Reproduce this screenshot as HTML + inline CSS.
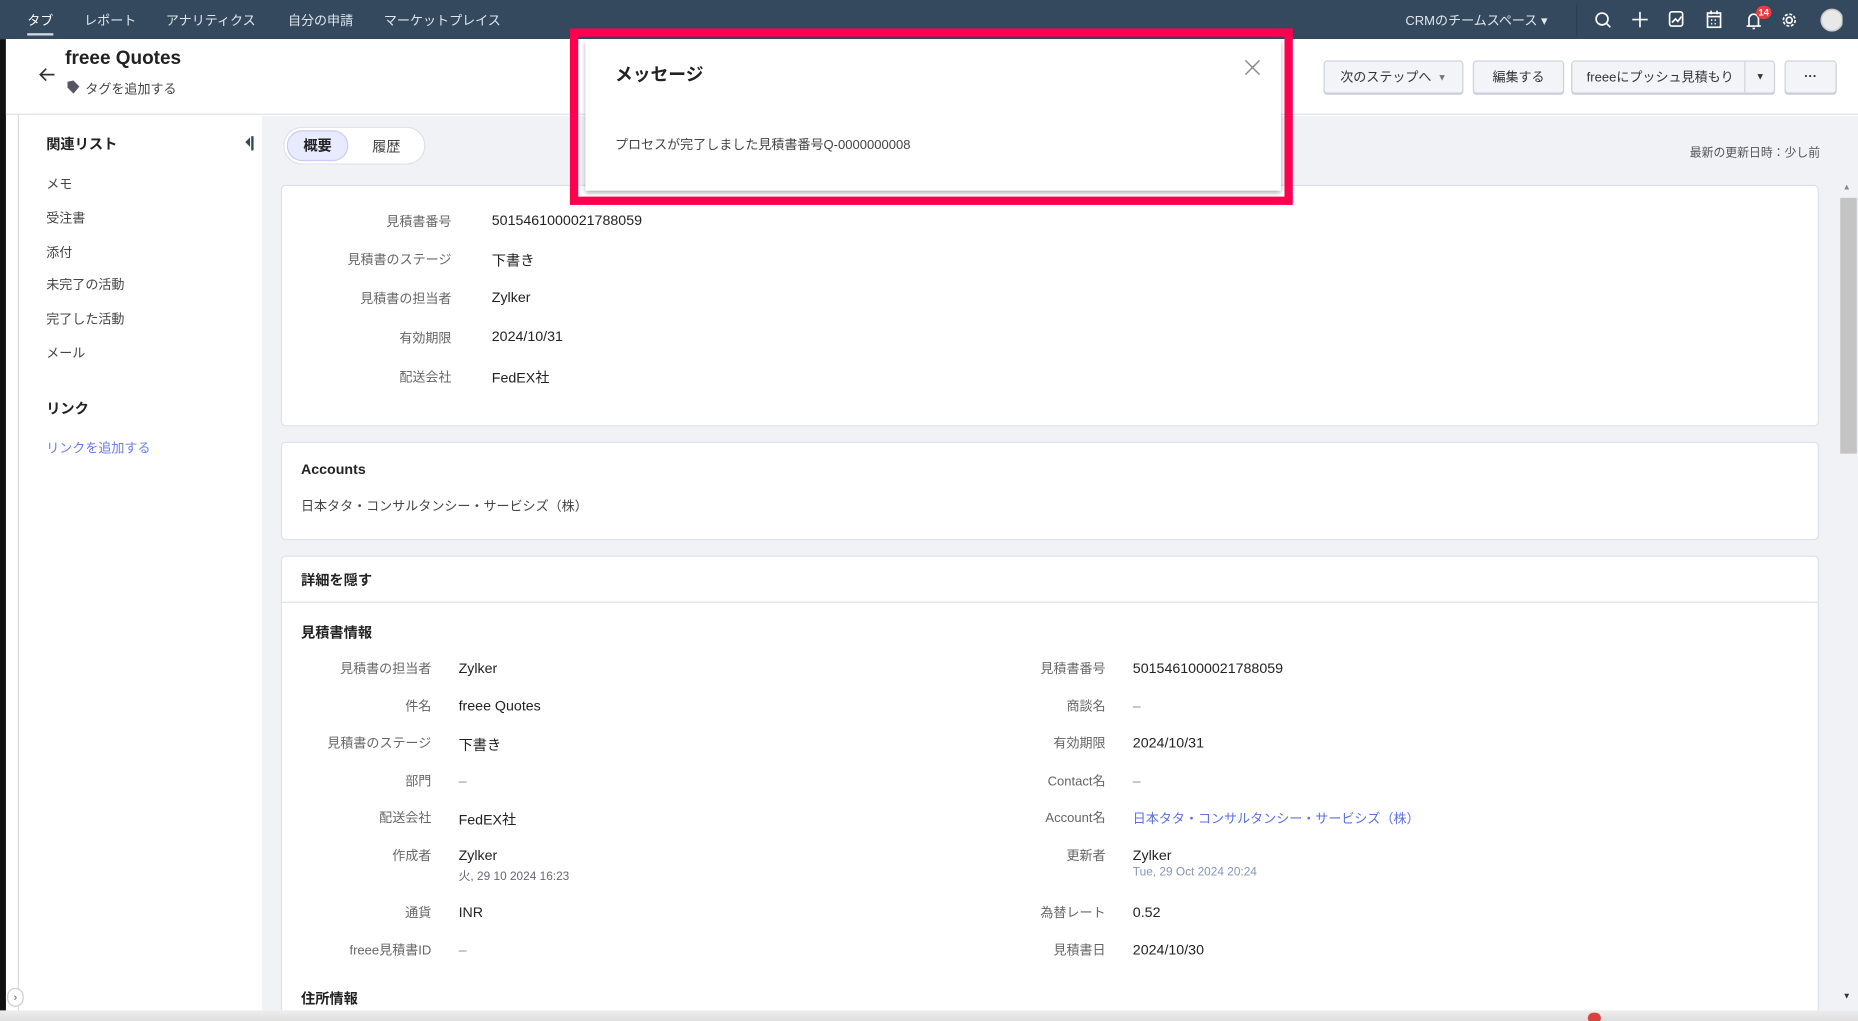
<!DOCTYPE html>
<html><head><meta charset="utf-8"><style>
*{box-sizing:border-box;margin:0;padding:0}
html,body{width:1858px;height:1021px;overflow:hidden;background:#fff}
body{font-family:"Liberation Sans","Noto Sans CJK JP",sans-serif;color:#222}
#w{position:absolute;left:0;top:0;width:1568px;height:862px;transform:scale(1.18495,1.1845);transform-origin:0 0;overflow:hidden;background:#fff}
.a{position:absolute;white-space:nowrap}
.top{left:0;top:0;width:1568px;height:33px;background:#34495e}
.nav{top:9px;font-size:11px;color:#dfe6ee}
.lbl{font-size:11px;color:#666;text-align:right}
.val{font-size:12px;color:#222}
.card{background:#fff;border:1px solid #dfe1ea;border-radius:4px}
.btn{top:51px;height:28px;border:1px solid #cfd3de;border-radius:3px;background:#f3f4f8;font-size:11px;color:#333;display:flex;align-items:center;justify-content:center;box-shadow:0 1px 0 #c8ccd6}
.side{font-size:11px;color:#444;left:39px}
</style></head><body><div id="w">
<div class="a top"></div>
<div class="a nav" style="left:23px;color:#fff">タブ</div>
<div class="a" style="left:23px;top:28px;width:22px;height:2px;background:#cfd8e0"></div>
<div class="a nav" style="left:71px">レポート</div>
<div class="a nav" style="left:140px">アナリティクス</div>
<div class="a nav" style="left:243px">自分の申請</div>
<div class="a nav" style="left:324px">マーケットプレイス</div>
<div class="a nav" style="left:1186px">CRMのチームスペース ▾</div>
<div class="a" style="left:1330px;top:4px;width:1px;height:26px;background:#2c3e50"></div>
<svg class="a" style="left:1340px;top:6px" width="215" height="22" viewBox="0 0 215 22" fill="none" stroke="#fff" stroke-width="1.4">
<circle cx="12" cy="10" r="5"/><path d="M15.5 13.5l3.5 3.5"/>
<path d="M44 4v13M37.5 10.5h13"/>
<rect x="69" y="4" width="11" height="12" rx="2"/><path d="M71 13l3-3 2 2 3-4"/>
<rect x="101" y="5" width="11" height="12"/><path d="M101 8h11M104 3v3M109 3v3M104 11h1M107 11h1M110 11h0M104 14h1M107 14h1"/>
<path d="M134 16h12M136 16v-6a4 4 0 0 1 8 0v6M139 18h2"/>
<circle cx="170" cy="11" r="2.5"/><circle cx="170" cy="11" r="5" stroke-dasharray="2.5 1.4"/>
<circle cx="206" cy="11" r="9" fill="#e8e8e8" stroke="#ccc"/>
</svg>
<div class="a" style="left:1482px;top:5px;width:13px;height:11px;border-radius:6px;background:#e63e3e;color:#fff;font-size:8px;font-weight:bold;text-align:center;line-height:11px">14</div>
<div class="a" style="left:0;top:33px;width:5px;height:829px;background:#111"></div>
<div class="a" style="left:15px;top:97px;width:1px;height:765px;background:#d8dae6"></div>
<!-- header -->
<div class="a" style="left:5px;top:33px;width:1563px;height:64px;border-bottom:1px solid #dfe1ea;background:#fff"></div>
<svg class="a" style="left:32px;top:56px" width="16" height="14" viewBox="0 0 16 14" fill="none" stroke="#333" stroke-width="1.4"><path d="M14 7H2M7 2L2 7l5 5"/></svg>
<div class="a" style="left:55px;top:41px;font-size:16px;font-weight:bold;color:#222">freee Quotes</div>
<svg class="a" style="left:56px;top:67px" width="12" height="13" viewBox="0 0 12 13"><path d="M6 1l5 5-5 6-5-5V2z" fill="#556"/></svg>
<div class="a" style="left:72px;top:67px;font-size:11px;color:#444">タグを追加する</div>
<div class="a btn" style="left:1117px;width:118px">次のステップへ <span style="font-size:8px;margin-left:5px;color:#777">▼</span></div>
<div class="a btn" style="left:1243px;width:77px">編集する</div>
<div class="a btn" style="left:1326px;width:172px;justify-content:flex-start;padding-left:12px">freeeにプッシュ見積もり<span style="position:absolute;left:145px;top:0;height:26px;border-left:1px solid #cfd3de;width:26px;text-align:center;line-height:26px;font-size:8px">▼</span></div>
<div class="a btn" style="left:1506px;width:44px;font-weight:bold">···</div>
<!-- sidebar -->
<div class="a" style="left:39px;top:113px;font-size:12px;font-weight:bold;color:#222">関連リスト</div>
<div class="a" style="left:207px;top:116px;width:0;height:0;border:4px solid transparent;border-right:4px solid #34495e;border-left:0"></div>
<div class="a" style="left:212px;top:115px;width:2px;height:12px;background:#34495e"></div>
<div class="a side" style="top:147px">メモ</div>
<div class="a side" style="top:176px">受注書</div>
<div class="a side" style="top:205px">添付</div>
<div class="a side" style="top:232px">未完了の活動</div>
<div class="a side" style="top:261px">完了した活動</div>
<div class="a side" style="top:290px">メール</div>
<div class="a" style="left:39px;top:336px;font-size:12px;font-weight:bold;color:#222">リンク</div>
<div class="a side" style="top:370px;color:#6b7de0">リンクを追加する</div>
<div class="a" style="left:6px;top:834px;width:14px;height:16px;border:1px solid #ccc;border-radius:8px;background:#fff;font-size:9px;color:#666;text-align:center;line-height:14px">›</div>
<!-- content -->
<div class="a" style="left:221px;top:98px;width:1347px;height:755px;background:#f1f2f6"></div>
<div class="a" style="left:239px;top:107px;width:120px;height:32px;border-radius:16px;background:#fff;border:1px solid #dfe1ea"></div>
<div class="a" style="left:242px;top:110px;width:52px;height:26px;border-radius:13px;background:#e8eaff;border:1px solid #c8ccf5;font-size:12px;font-weight:bold;text-align:center;line-height:24px">概要</div>
<div class="a" style="left:314px;top:115px;font-size:12px;color:#444">履歴</div>
<div class="a" style="left:1426px;top:120px;font-size:10px;color:#555">最新の更新日時：少し前</div>
<div class="a card" style="left:237px;top:156px;width:1298px;height:204px"></div>
<div class="a lbl" style="left:240px;width:141px;top:179px">見積書番号</div><div class="a val" style="left:415px;top:179px">5015461000021788059</div>
<div class="a lbl" style="left:240px;width:141px;top:211px">見積書のステージ</div><div class="a val" style="left:415px;top:211px">下書き</div>
<div class="a lbl" style="left:240px;width:141px;top:244px">見積書の担当者</div><div class="a val" style="left:415px;top:244px">Zylker</div>
<div class="a lbl" style="left:240px;width:141px;top:277px">有効期限</div><div class="a val" style="left:415px;top:277px">2024/10/31</div>
<div class="a lbl" style="left:240px;width:141px;top:310px">配送会社</div><div class="a val" style="left:415px;top:310px">FedEX社</div>
<div class="a card" style="left:237px;top:373px;width:1298px;height:83px"></div>
<div class="a" style="left:254px;top:389px;font-size:12px;font-weight:bold">Accounts</div>
<div class="a" style="left:254px;top:419px;font-size:11px;color:#444">日本タタ・コンサルタンシー・サービシズ（株）</div>
<div class="a card" style="left:237px;top:469px;width:1298px;height:400px"></div>
<div class="a" style="left:238px;top:508px;width:1296px;height:1px;background:#dfe1ea"></div>
<div class="a" style="left:254px;top:481px;font-size:12px;font-weight:bold">詳細を隠す</div>
<div class="a" style="left:254px;top:525px;font-size:12px;font-weight:bold">見積書情報</div>
<div class="a lbl" style="left:240px;width:124px;top:556px">見積書の担当者</div><div class="a val" style="left:387px;top:557px">Zylker</div>
<div class="a lbl" style="left:240px;width:124px;top:588px">件名</div><div class="a val" style="left:387px;top:589px">freee Quotes</div>
<div class="a lbl" style="left:240px;width:124px;top:619px">見積書のステージ</div><div class="a val" style="left:387px;top:620px">下書き</div>
<div class="a lbl" style="left:240px;width:124px;top:651px">部門</div><div class="a val" style="left:387px;top:652px;color:#888">–</div>
<div class="a lbl" style="left:240px;width:124px;top:682px">配送会社</div><div class="a val" style="left:387px;top:683px">FedEX社</div>
<div class="a lbl" style="left:240px;width:124px;top:714px">作成者</div><div class="a val" style="left:387px;top:715px">Zylker</div><div class="a" style="left:387px;top:731px;font-size:10px;color:#667">火, 29 10 2024 16:23</div>
<div class="a lbl" style="left:240px;width:124px;top:762px">通貨</div><div class="a val" style="left:387px;top:763px">INR</div>
<div class="a lbl" style="left:240px;width:124px;top:794px">freee見積書ID</div><div class="a val" style="left:387px;top:795px;color:#888">–</div>
<div class="a lbl" style="left:780px;width:153px;top:556px">見積書番号</div><div class="a val" style="left:956px;top:557px">5015461000021788059</div>
<div class="a lbl" style="left:780px;width:153px;top:588px">商談名</div><div class="a val" style="left:956px;top:589px;color:#888">–</div>
<div class="a lbl" style="left:780px;width:153px;top:619px">有効期限</div><div class="a val" style="left:956px;top:620px">2024/10/31</div>
<div class="a lbl" style="left:780px;width:153px;top:651px">Contact名</div><div class="a val" style="left:956px;top:652px;color:#888">–</div>
<div class="a lbl" style="left:780px;width:153px;top:682px">Account名</div><div class="a" style="left:956px;top:683px;font-size:11px;color:#5b6fe0">日本タタ・コンサルタンシー・サービシズ（株）</div>
<div class="a lbl" style="left:780px;width:153px;top:714px">更新者</div><div class="a val" style="left:956px;top:715px">Zylker</div><div class="a" style="left:956px;top:731px;font-size:10px;color:#8a93b8">Tue, 29 Oct 2024 20:24</div>
<div class="a lbl" style="left:780px;width:153px;top:762px">為替レート</div><div class="a val" style="left:956px;top:763px">0.52</div>
<div class="a lbl" style="left:780px;width:153px;top:794px">見積書日</div><div class="a val" style="left:956px;top:795px">2024/10/30</div>
<div class="a" style="left:254px;top:834px;font-size:12px;font-weight:bold">住所情報</div>
<!-- scrollbar -->
<div class="a" style="left:1552px;top:98px;width:16px;height:755px;background:#f1f2f6"></div>
<div class="a" style="left:1555px;top:155px;font-size:7px;color:#888">▲</div>
<div class="a" style="left:1553px;top:167px;width:14px;height:216px;background:#c4c4c4"></div>
<div class="a" style="left:1555px;top:838px;font-size:7px;color:#333">▼</div>
<div class="a" style="left:0;top:853px;width:1568px;height:9px;background:linear-gradient(#eee,#ddd)"></div>
<div class="a" style="left:1340px;top:855px;width:11px;height:9px;border-radius:5px;background:#d94040"></div>
<!-- modal -->
<div class="a" style="left:481px;top:24px;width:610px;height:149px;border:7px solid #ff0050"></div>
<div class="a" style="left:494px;top:34px;width:587px;height:127px;background:#fff;box-shadow:0 2px 4px rgba(0,0,0,.35)"></div>
<div class="a" style="left:519px;top:52px;font-size:15px;font-weight:bold;color:#222">メッセージ</div>
<svg class="a" style="left:1049px;top:49px" width="16" height="16" viewBox="0 0 16 16" stroke="#888" stroke-width="1.2"><path d="M2 2l12 12M14 2L2 14"/></svg>
<div class="a" style="left:519px;top:114px;font-size:11px;color:#444">プロセスが完了しました見積書番号Q-0000000008</div>
</div></body></html>
